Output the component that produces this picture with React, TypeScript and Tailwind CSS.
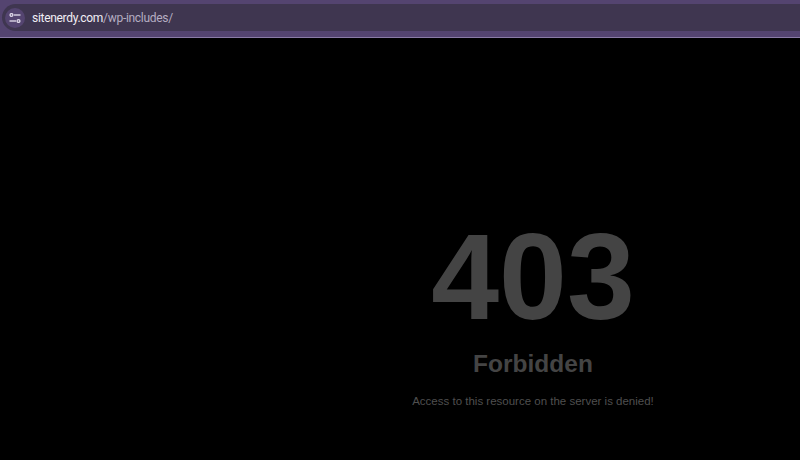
export default function App() {
  return (
    <div className="flex h-[460px] w-[800px] flex-col overflow-hidden bg-black font-['Liberation_Sans',Arial,sans-serif]">
      {/* browser toolbar */}
      <div className="flex h-[38px] shrink-0 flex-col border-b border-[#8a7ba6] bg-[#544470] pt-[4px]">
        <div className="ml-[2px] flex h-[27px] items-center rounded-l-full bg-[#3f3650] pl-[3px]">
          <div className="flex h-[20px] w-[20px] items-center justify-center rounded-full bg-[#544470] text-[#dcd6e6]">
            <svg width="12" height="10" viewBox="0 0 12 10" fill="none" stroke="currentColor" strokeWidth="1.4">
              <circle cx="2.5" cy="2" r="1.4" />
              <path d="M5 2h6.5" />
              <path d="M0.5 8H7" />
              <circle cx="9.5" cy="8" r="1.4" />
            </svg>
          </div>
          <div className="ml-[7px] font-['Roboto',sans-serif] text-[12px] leading-none tracking-[-0.3px] text-[#f1eef5]">
            sitenerdy.com<span className="text-[#b5adc2]">/wp-includes/</span>
          </div>
        </div>
      </div>

      {/* error page */}
      <div className="flex flex-1 flex-col items-center pl-[266px] pt-[179px] text-[#444444]">
        <div className="text-[122px] font-bold leading-[120px]">403</div>
        <div className="mt-[13px] text-[24.5px] font-bold leading-[28px]">Forbidden</div>
        <div className="mt-[15px] text-[11.5px] leading-[16px] text-[#4f4f4f]">Access to this resource on the server is denied!</div>
      </div>
    </div>
  );
}
